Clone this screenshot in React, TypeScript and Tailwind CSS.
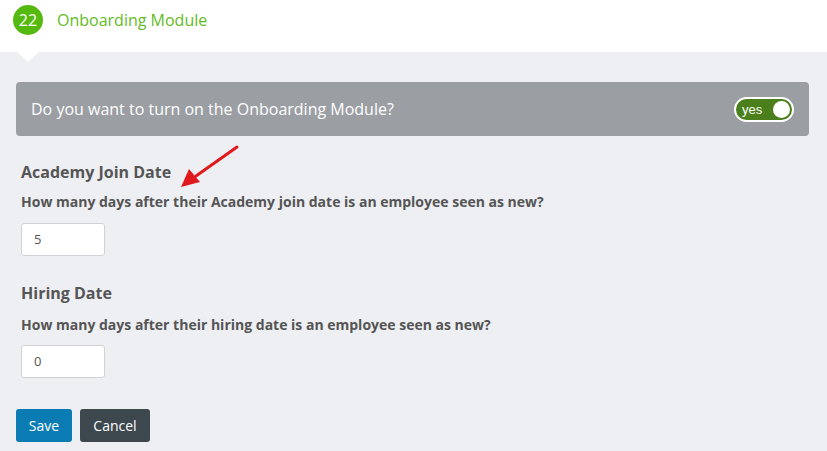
import React from "react";

export default function App() {
  return (
    <div className="relative w-[827px] h-[451px] overflow-hidden bg-[#eeeff3] text-[#555555]" style={{ fontFamily: '"Open Sans", sans-serif' }}>
      {/* header */}
      <div className="relative h-[52px] bg-white flex items-start pl-[13px] pt-[5px]">
        <div className="w-[30px] h-[30px] rounded-full bg-[#56b90f] text-white flex items-center justify-center text-[16px] leading-none">22</div>
        <div className="ml-[14px] mt-[5px] text-[16px] leading-[20px] text-[#62bb1f]">Onboarding Module</div>
        <div className="absolute left-[17px] top-[52px] w-0 h-0 border-l-[11px] border-r-[11px] border-t-[10px] border-l-transparent border-r-transparent border-t-white" />
      </div>

      <div className="pl-4 pr-[18px] pt-[30px]">
        {/* question panel */}
        <div className="h-[54px] rounded-[4px] bg-[#9b9ea2] flex items-center justify-between pl-[15px] pr-[15px]">
          <span className="text-white text-[16px]">Do you want to turn on the Onboarding Module?</span>
          <div className="w-[60px] h-[25px] rounded-full bg-[#4a7f1b] border-2 border-white flex items-center justify-between pl-[6px] pr-[2px]">
            <span className="text-white text-[13px] leading-none" style={{ fontFamily: '"Liberation Sans", sans-serif' }}>yes</span>
            <span className="w-[17px] h-[17px] rounded-full bg-white" />
          </div>
        </div>

        {/* academy */}
        <div className="pl-[5px] pt-[25px]">
          <div className="text-[16px] font-bold leading-[22px] text-[#555555]">Academy Join Date</div>
          <div className="mt-[10px] text-[14px] font-bold leading-[18px] text-[#555555]">How many days after their Academy join date is an employee seen as new?</div>
          <div className="mt-[12px] w-[84px] h-[33px] bg-white border border-[#cfd2d6] rounded-[3px] flex items-center pl-[12px] text-[13px] text-[#555555]">5</div>
        </div>

        {/* hiring */}
        <div className="pl-[5px] pt-[26px]">
          <div className="text-[16px] font-bold leading-[22px] text-[#555555]">Hiring Date</div>
          <div className="mt-[12px] text-[14px] font-bold leading-[18px] text-[#555555]">How many days after their hiring date is an employee seen as new?</div>
          <div className="mt-[11px] w-[84px] h-[33px] bg-white border border-[#cfd2d6] rounded-[3px] flex items-center pl-[12px] text-[13px] text-[#555555]">0</div>
        </div>

        {/* buttons */}
        <div className="mt-[31px] flex gap-[8px]">
          <button className="w-[56px] h-[33px] rounded-[3px] bg-[#0a7cb3] text-white text-[14px]">Save</button>
          <button className="w-[70px] h-[33px] rounded-[3px] bg-[#3c474e] text-white text-[14px]">Cancel</button>
        </div>
      </div>

      {/* annotation arrow */}
      <svg className="absolute left-0 top-0" width="827" height="451" viewBox="0 0 827 451">
        <line x1="237" y1="147" x2="196" y2="176" stroke="#e0191c" strokeWidth="3" strokeLinecap="round" />
        <polygon points="181,187 189,169 200,182" fill="#e0191c" />
      </svg>
    </div>
  );
}
